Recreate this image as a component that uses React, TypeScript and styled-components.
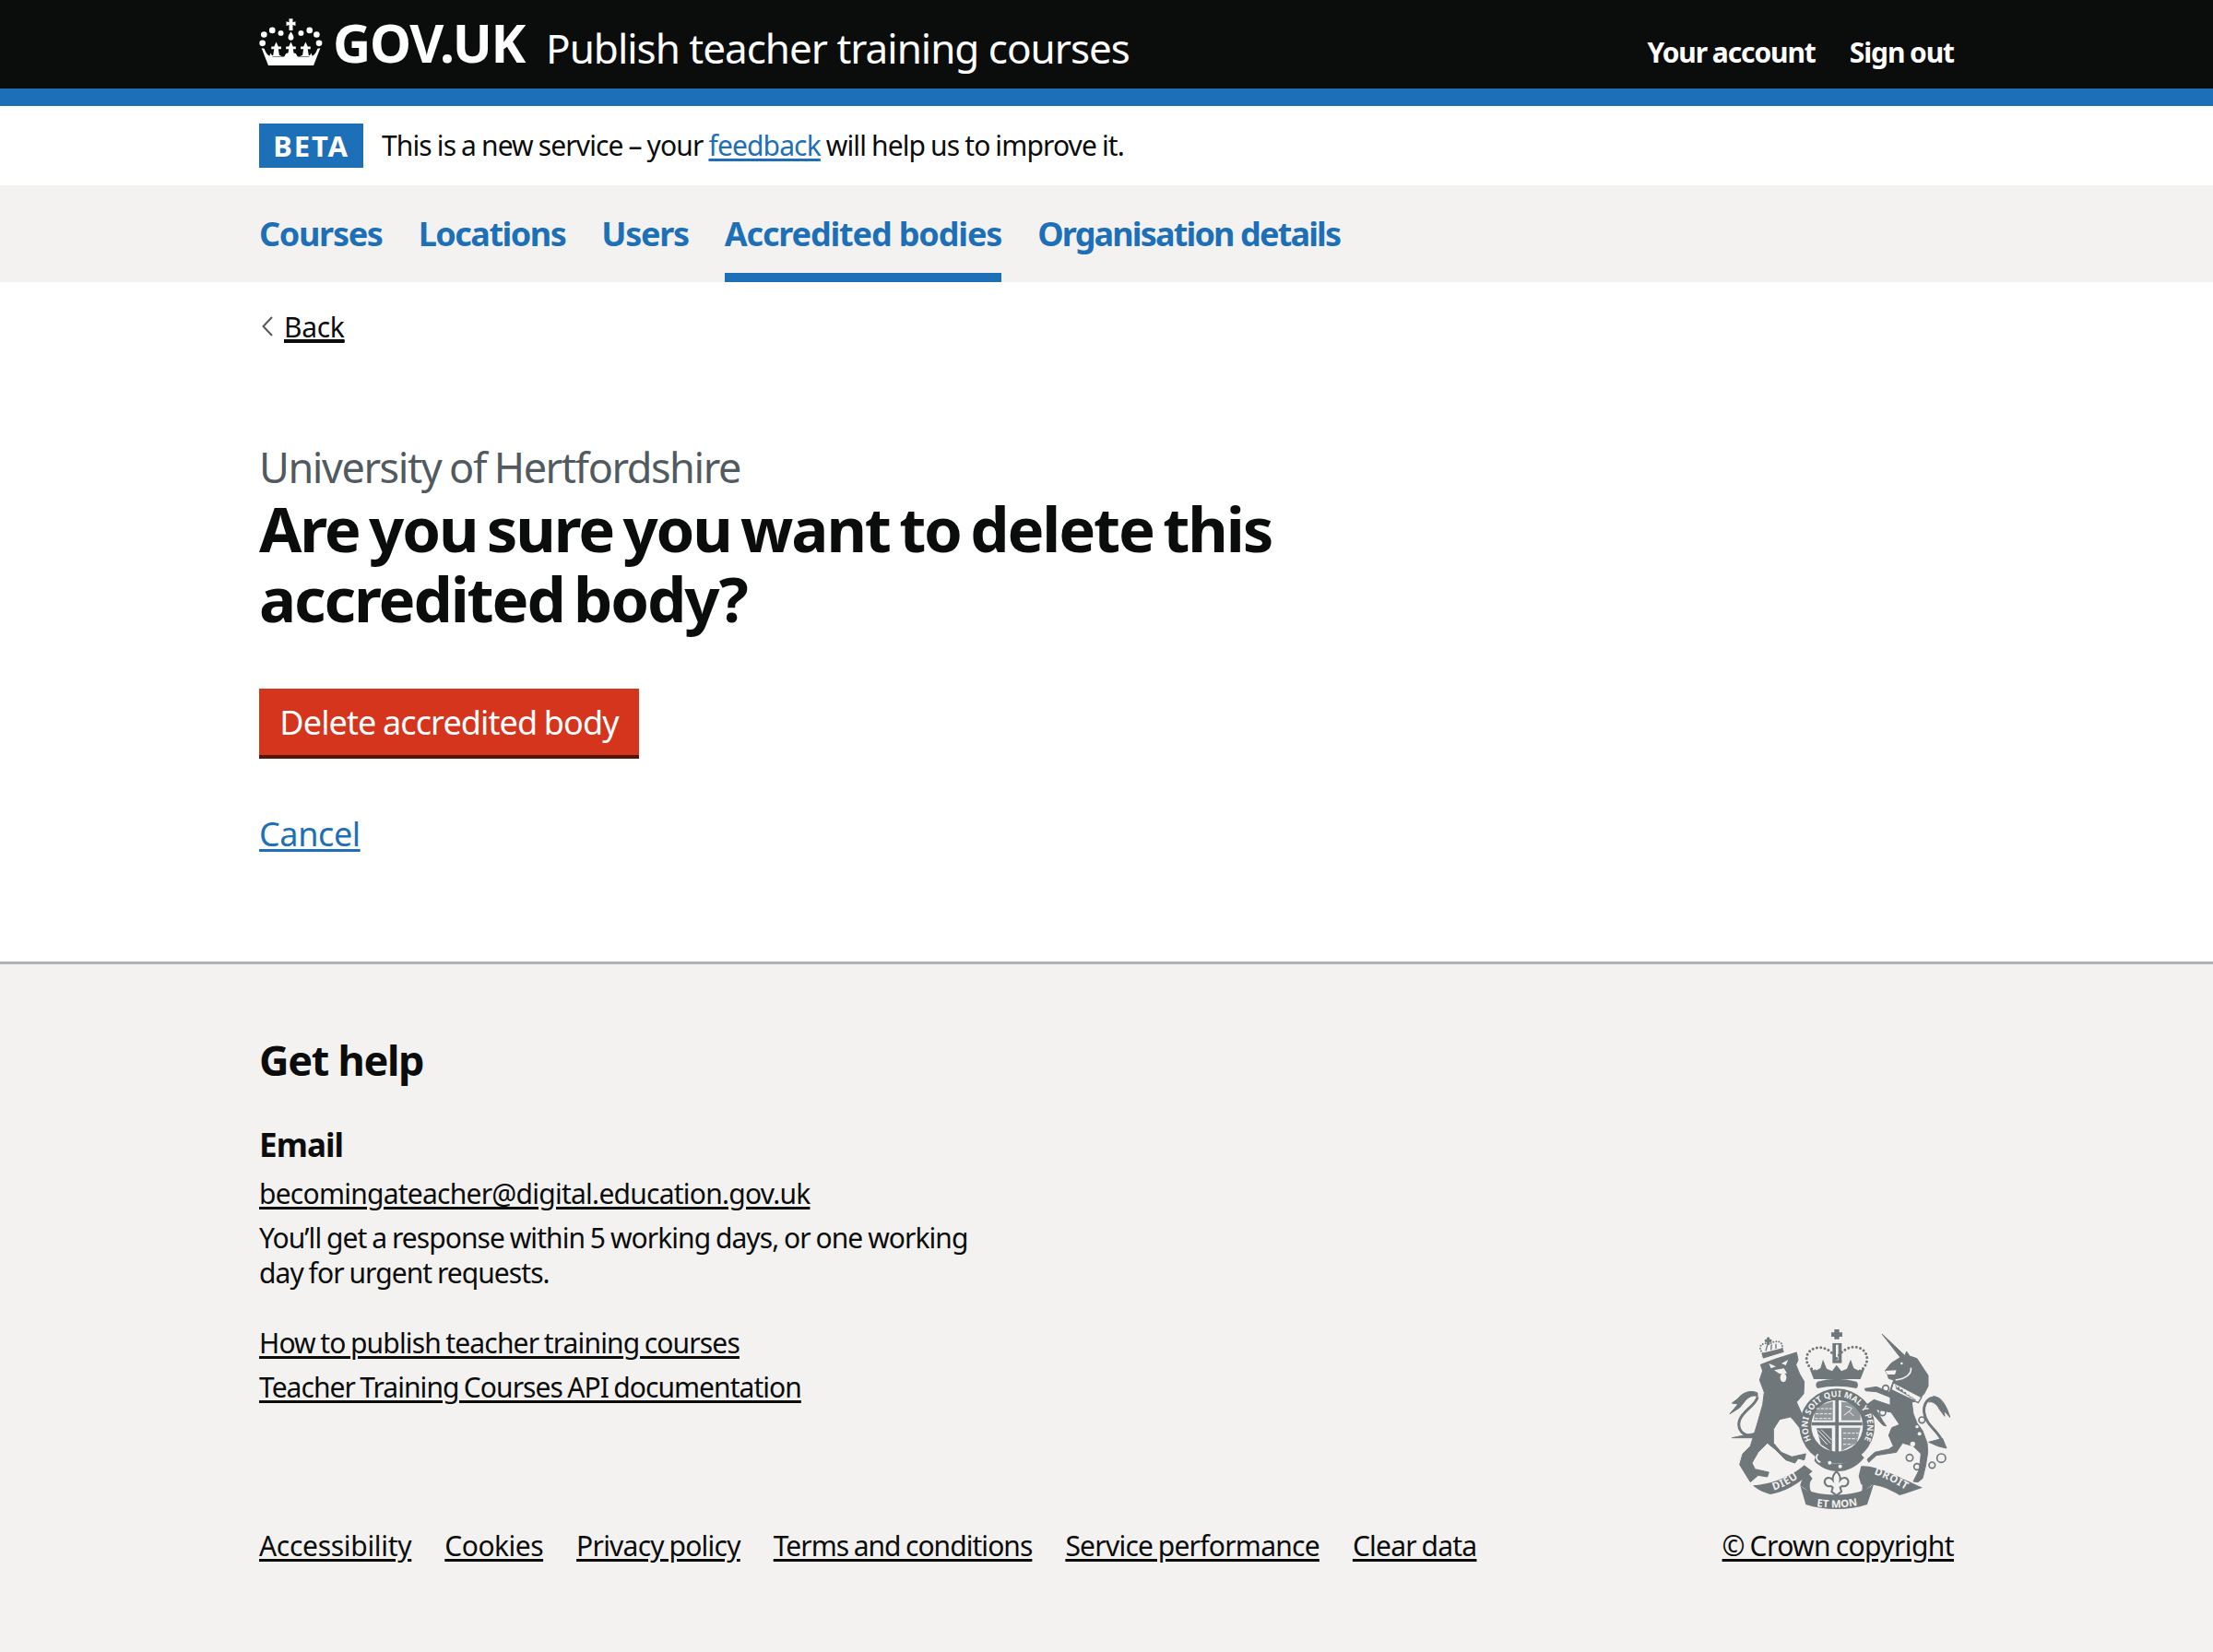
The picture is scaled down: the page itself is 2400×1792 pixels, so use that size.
import React from 'react';
import styled, { createGlobalStyle } from 'styled-components';

const GlobalStyle = createGlobalStyle`
  html, body {
    margin: 0;
    padding: 0;
    background: #fff;
    color: #0b0c0c;
    font-family: "Noto Sans", "Liberation Sans", sans-serif;
  }
`;

const Container = styled.div`
  width: 1838px;
  margin: 0 auto;
`;

const Header = styled.header`
  background: #0b0c0c;
  border-bottom: 19px solid #1d70b8;
`;

const HeaderInner = styled(Container)`
  height: 96px;
  display: flex;
  justify-content: space-between;
  color: #fff;
`;

const Brand = styled.div`
  display: flex;
  align-items: flex-start;
`;

const Crown = styled.svg`
  width: 69px;
  height: 52px;
  margin-top: 20px;
  margin-right: 11px;
`;

const Logotype = styled.span`
  font-size: 57px;
  font-weight: 700;
  line-height: 96px;
  height: 96px;
  margin-top: -2px;
  letter-spacing: -1.3px;
`;

const ServiceName = styled.span`
  font-size: 44px;
  line-height: 104px;
  margin-left: 23px;
  letter-spacing: -1px;
`;

const HeaderLinks = styled.nav`
  display: flex;
  gap: 37px;
  line-height: 114px;
  font-size: 30px;
  font-weight: 700;
  letter-spacing: -1.1px;
  word-spacing: -1px;
`;

const BetaBar = styled(Container)`
  height: 86px;
  display: flex;
  align-items: flex-start;
  padding-top: 19px;
  box-sizing: border-box;
`;

const BetaTag = styled.strong`
  width: 113px;
  height: 48px;
  background: #1d70b8;
  color: #fff;
  font-size: 31px;
  line-height: 49px;
  letter-spacing: 1.8px;
  text-align: center;
  margin-right: 20px;
`;

const BetaText = styled.p`
  margin: 0;
  font-size: 30px;
  line-height: 48px;
  letter-spacing: -0.87px;
  word-spacing: -1px;
`;

const BlueLink = styled.a`
  color: #1d70b8;
  text-decoration: underline;
  text-decoration-thickness: 3px;
  text-underline-offset: 3px;
`;

const TabBar = styled.div`
  background: #f3f2f1;
`;

const Tabs = styled(Container)`
  height: 105px;
  display: flex;
  gap: 39px;
`;

const Tab = styled.a<{ $active?: boolean; $tracking?: number }>`
  color: #1d70b8;
  font-size: 36px;
  font-weight: 700;
  line-height: 105px;
  letter-spacing: ${(p) => p.$tracking ?? -1.3}px;
  box-sizing: border-box;
  border-bottom: 10px solid ${(p) => (p.$active ? '#1d70b8' : 'transparent')};
`;

const Main = styled(Container)`
  height: 737px;
`;

const BackLink = styled.a`
  display: flex;
  align-items: center;
  height: 96px;
  font-size: 30px;
  letter-spacing: -0.3px;
  color: #0b0c0c;
  span {
    text-decoration: underline;
    text-decoration-thickness: 3px;
    text-underline-offset: 3px;
  }
  svg {
    margin: 0 12px 0 3px;
  }
`;

const Caption = styled.div`
  margin-top: 75px;
  font-size: 45px;
  line-height: 60px;
  color: #505a5f;
  letter-spacing: -1.42px;
  word-spacing: -1.5px;
`;

const Title = styled.h1`
  margin: -2px 0 0;
  width: 1200px;
  font-size: 67px;
  line-height: 76px;
  font-weight: 700;
  letter-spacing: -2.1px;
  word-spacing: -5px;
`;

const DangerButton = styled.button`
  display: block;
  margin-top: 60px;
  width: 412px;
  height: 76px;
  padding: 0 0 4px;
  border: 0;
  background: #d4351c;
  box-shadow: inset 0 -4px 0 #55150b;
  color: #fff;
  font-family: inherit;
  font-size: 36px;
  letter-spacing: -0.88px;
  word-spacing: -1px;
`;

const CancelRow = styled.p`
  margin: 54px 0 0;
  font-size: 36px;
  line-height: 56px;
  letter-spacing: -0.4px;
`;

const Footer = styled.footer`
  background: #f3f2f1;
  border-top: 3px solid #b1b4b6;
  height: 749px;
  box-sizing: border-box;
`;

const FooterInner = styled(Container)`
  display: flex;
  justify-content: space-between;
  align-items: flex-end;
  height: 655px;
`;

const FooterLeft = styled.div`
  display: flex;
  flex-direction: column;
`;

const HelpTitle = styled.h2`
  margin: -2px 0 0;
  font-size: 45px;
  line-height: 56px;
  font-weight: 700;
  letter-spacing: -1.3px;
`;

const HelpLabel = styled.h3`
  margin: 40px 0 0;
  font-size: 35px;
  line-height: 48px;
  font-weight: 700;
  letter-spacing: -0.9px;
`;

const FooterLink = styled.a<{ $tracking?: number }>`
  color: #0b0c0c;
  font-size: 30px;
  letter-spacing: ${(p) => p.$tracking ?? -0.75}px;
  word-spacing: -1.5px;
  text-decoration: underline;
  text-decoration-thickness: 3px;
  text-underline-offset: 3px;
`;

const LinkLine = styled.div<{ $top?: number }>`
  line-height: 48px;
  height: 48px;
  margin-top: ${(p) => p.$top ?? 0}px;
`;

const HelpText = styled.p`
  margin: 5px 0 0;
  width: 790px;
  font-size: 30px;
  line-height: 38px;
  letter-spacing: -0.95px;
  word-spacing: -1px;
`;

const MetaLinks = styled.div`
  display: flex;
  gap: 36px;
  line-height: 48px;
  margin-top: 124px;
`;

const CrownCopyright = styled.div`
  display: flex;
  flex-direction: column;
  align-items: center;
  line-height: 48px;
`;

const Arms = styled.svg`
  width: 240px;
  height: 195px;
  margin-bottom: 16px;
  margin-left: 4px;
`;

const fleurX = [118, 166, 214];

const CrownLogo = () => (
  <Crown viewBox="62 30 208 155" aria-hidden="true">
    <g fill="#fff">
      <path d="M160 30h12v12l9-3v14l-9-3v18h-12V50l-9 3V39l9 3z" />
      <path d="M166 72c4 7 9 13 9 19 0 6-4 10-9 10s-9-4-9-10c0-6 5-12 9-19z" />
      <circle cx="105" cy="68" r="10" />
      <circle cx="133" cy="77" r="9" />
      <circle cx="78" cy="82" r="10" />
      <circle cx="73" cy="110" r="10" />
      <circle cx="227" cy="68" r="10" />
      <circle cx="199" cy="77" r="9" />
      <circle cx="250" cy="82" r="10" />
      <circle cx="258" cy="110" r="10" />
      {fleurX.map((x) => (
        <path key={x} d={`M${x} 106l7 15h9v8h-9l3 20 8 4h-36l8-4 3-20h-9v-8h9z`} />
      ))}
      <path d="M70 126l9 2c4 12 9 20 17 24l4-10 6 12 38 0 6-10 16-4 16 4 6 10 38 0 6-12 4 10c8-4 13-12 17-24l9-2-22 57H92z" />
    </g>
  </Crown>
);

const ArmsLogo = () => (
  <Arms viewBox="160 70 720 585" role="img" aria-label="Royal coat of arms">
    <defs>
      <path id="garter" d="M445 455A97 97 0 1 1 582 455" />
      <path id="ribbon-left" d="M278 602C330 590 372 566 410 534" />
      <path id="ribbon-mid" d="M418 640C470 654 552 654 606 636" />
      <path id="ribbon-right" d="M618 538C660 548 700 570 748 600" />
    </defs>

    {/* lion */}
    <g transform="translate(135 45)" fill="#6f777b" stroke="#6f777b" strokeWidth="3" strokeLinejoin="round">
      <path d="M128 140L175 122 245 100 250 125 243 140 255 170 270 195 268 235 245 262 262 300 280 335 290 365 280 385 262 370 255 345 235 320 225 310 190 318 170 350 170 395 195 425 230 440 275 430 270 450 250 445 240 460 210 450 175 415 150 395 120 425 100 460 110 480 155 490 150 505 120 500 95 522 75 490 60 465 70 430 95 405 115 340 135 270 140 230 125 190 135 160Z" />
      <path d="M118 232C100 222 70 228 55 250L35 265 55 268 28 300 60 280 80 255C95 240 110 238 118 245Z" />
      <path d="M105 370C70 375 50 350 60 320 70 290 115 270 118 245" fill="none" strokeWidth="9" />
      <path d="M35 378L112 362 112 378Z" />
      <path d="M133 104L198 88 203 98 137 118Z" />
      <path d="M135 103C115 80 135 65 158 72 175 60 205 60 198 90" fill="none" strokeWidth="6" strokeLinecap="round" strokeDasharray="0 9" />
      <path d="M150 52h6v7h7v6h-7v10h-6V65h-7v-6h7z" />
      <path d="M145 95L150 76M162 92L164 74M178 88L178 72" strokeWidth="4" />
      <path d="M155 136L178 146 162 152ZM196 136L218 124 210 142ZM172 158L204 152 214 168 190 170Z" fill="#f3f2f1" stroke="none" />
      <ellipse cx="202" cy="182" rx="10" ry="14" fill="#f3f2f1" stroke="none" />
    </g>

    {/* unicorn */}
    <g transform="translate(510 45)" fill="#6f777b" stroke="#6f777b" strokeWidth="3" strokeLinejoin="round">
      <path d="M148 40L222 110 212 122Z" />
      <path d="M158 160L178 135 205 118 222 112 228 97 238 112 262 120 278 145 298 175 298 210 285 235 262 258 245 262 250 300 262 330 280 355 295 395 297 425 290 470 280 510 265 522 250 520 270 480 275 430 250 405 215 395 195 425 130 435 105 458 100 448 125 425 170 415 185 405 170 370 180 345 205 335 178 295 128 285 150 322 162 340 150 336 118 300 96 272 122 254 175 272 175 246 130 228 95 225 92 218 130 212 172 230 186 190 170 185 165 170Z" />
      <path d="M158 160L195 158 190 172 166 172Z" fill="#f3f2f1" stroke="none" />
      <circle cx="212" cy="136" r="4" fill="#f3f2f1" stroke="none" />
      <path d="M242 150C246 172 222 186 192 190" fill="none" stroke="#f3f2f1" strokeWidth="5" />
      <path d="M185 198L277 246 266 264 178 222Z" fill="#f3f2f1" stroke="#6f777b" strokeWidth="4" />
      <path d="M192 206l5 10 6-4 3 10 8-2 3 10 8-1 3 10 8-1 3 9 8-1 3 8 9 1-64-36z" strokeWidth="1" />
      <path d="M345 395C340 360 290 340 285 295 282 265 300 245 322 248" fill="none" strokeWidth="9" />
      <path d="M315 243C340 245 350 265 360 285L370 312 350 290 352 308 335 285C325 265 310 258 300 262Z" />
      <path d="M300 392L345 380 358 412 330 405Z" />
      <circle cx="270" cy="365" r="6" fill="#f3f2f1" stroke="none" />
      <circle cx="248" cy="398" r="8" fill="#f3f2f1" stroke="none" />
      <circle cx="262" cy="342" r="5" fill="#f3f2f1" stroke="none" />
      <g fill="none" strokeWidth="5">
        <circle cx="160" cy="217" r="10" />
        <circle cx="150" cy="296" r="10" />
        <circle cx="278" cy="320" r="10" />
        <circle cx="238" cy="443" r="11" />
        <circle cx="262" cy="472" r="10" />
        <circle cx="311" cy="467" r="10" />
        <circle cx="341" cy="444" r="14" />
      </g>
    </g>

    {/* royal crown */}
    <g fill="#6f777b">
      <path d="M503 70h16v10h10v14h-10v8h-16v-8h-10V80h10z" />
      <path d="M497 115h30v65h-30z" />
      <path d="M508 120h8v50h-8z" fill="#f3f2f1" />
      <path d="M422 196L440 206 458 196 466 168 478 198 496 206 510 186 526 206 544 198 556 168 566 196 584 206 602 196 588 232H436Z" />
      <path d="M448 240Q510 222 575 240 585 250 575 262 510 248 448 262 438 250 448 240Z" />
      <path d="M440 205C405 190 400 140 445 130 470 125 495 140 510 165 525 140 555 120 585 130 620 145 615 190 585 205" fill="none" stroke="#6f777b" strokeWidth="9" strokeLinecap="round" strokeDasharray="0 13" />
    </g>

    {/* garter and shield */}
    <g fill="#6f777b">
      <circle cx="512" cy="385" r="122" />
      <path d="M445 470C465 500 490 508 512 508S565 498 584 470L600 488C575 520 545 532 515 532 485 532 455 518 438 498Z" />
    </g>
    <circle cx="512" cy="384" r="84" fill="#f3f2f1" />
    <g fill="#6f777b">
      <path d="M506 296h11v176h-11zM430 372h164v11H430z" />
      <path d="M526 306l50 4 12 42v14h-62z" opacity="0.75" />
      <path d="M442 322l56-18v62h-62z" opacity="0.75" />
      <path d="M526 390h62l-12 50-50 26z" opacity="0.75" />
      <path d="M445 392h50v76l-36-24z" />
    </g>
    <g fill="none" stroke="#f3f2f1" strokeWidth="3">
      <path d="M450 398L490 440M450 412L480 445M460 396L494 430" />
      <path d="M445 328h50M442 345h54M440 360h56M532 408h50M532 426h44M532 444h30" strokeDasharray="10 4" />
      <path d="M540 320l20 6-8 12 14 14M534 350l18-14" />
    </g>
    <circle cx="488" cy="504" r="6" fill="#f3f2f1" />
    <circle cx="522" cy="516" r="6" fill="#f3f2f1" />
    <path d="M450 476C440 484 446 500 458 502" fill="none" stroke="#f3f2f1" strokeWidth="5" />

    {/* motto ribbon */}
    <g fill="#6f777b">
      <path d="M238 578C300 575 370 545 405 512L432 532C385 575 340 600 295 607 270 600 250 590 238 578Z" />
      <path d="M392 578C425 618 590 622 632 572L610 640C550 660 470 660 410 640Z" />
      <path d="M590 515C640 510 720 555 790 585 760 595 735 605 715 610 670 580 620 570 590 575L582 548Z" />
      <path d="M392 578C395 560 405 545 420 540L432 556C420 566 420 590 432 606ZM632 572C628 560 612 545 600 540L586 560C596 570 596 590 590 604Z" />
    </g>
    <path d="M510 532c8 8 14 16 12 28 8-10 22-10 26 2 3 12-8 22-20 18l-6 4 4 14-16 12-16-12 4-14-6-4c-12 4-23-6-20-18 4-12 18-12 26-2-2-12 4-20 12-28z" fill="#f3f2f1" stroke="#6f777b" strokeWidth="6" />
    <g fill="#f3f2f1" fontFamily="'Noto Sans', sans-serif" fontWeight="700" textAnchor="middle">
      <text fontSize="27" letterSpacing="0.5">
        <textPath href="#garter" startOffset="50%">HONI SOIT QUI MAL Y PENSE</textPath>
      </text>
      <text fontSize="34" letterSpacing="2">
        <textPath href="#ribbon-left" startOffset="50%">DIEU</textPath>
      </text>
      <text fontSize="34">
        <textPath href="#ribbon-mid" startOffset="50%">ET MON</textPath>
      </text>
      <text fontSize="34" letterSpacing="2">
        <textPath href="#ribbon-right" startOffset="50%">DROIT</textPath>
      </text>
    </g>
  </Arms>
);

const App: React.FC = () => {
  return (
    <>
      <GlobalStyle />
      <Header>
        <HeaderInner>
          <Brand>
            <CrownLogo />
            <Logotype>GOV.UK</Logotype>
            <ServiceName>Publish teacher training courses</ServiceName>
          </Brand>
          <HeaderLinks>
            <span>Your account</span>
            <span>Sign out</span>
          </HeaderLinks>
        </HeaderInner>
      </Header>
      <BetaBar>
        <BetaTag>BETA</BetaTag>
        <BetaText>
          This is a new service – your <BlueLink href="#">feedback</BlueLink> will help us to improve it.
        </BetaText>
      </BetaBar>
      <TabBar>
        <Tabs>
          <Tab>Courses</Tab>
          <Tab $tracking={-1.5}>Locations</Tab>
          <Tab>Users</Tab>
          <Tab $active $tracking={-1.15}>Accredited bodies</Tab>
          <Tab $tracking={-1.85}>Organisation details</Tab>
        </Tabs>
      </TabBar>
      <Main>
        <BackLink href="#">
          <svg width="12" height="22" viewBox="0 0 12 22" aria-hidden="true">
            <path d="M11 1 1.5 11 11 21" fill="none" stroke="#505a5f" strokeWidth="2" />
          </svg>
          <span>Back</span>
        </BackLink>
        <Caption>University of Hertfordshire</Caption>
        <Title>Are you sure you want to delete this accredited body?</Title>
        <DangerButton>Delete accredited body</DangerButton>
        <CancelRow>
          <BlueLink href="#">Cancel</BlueLink>
        </CancelRow>
      </Main>
      <Footer>
        <FooterInner>
          <FooterLeft>
            <HelpTitle>Get help</HelpTitle>
            <HelpLabel>Email</HelpLabel>
            <LinkLine $top={5}>
              <FooterLink href="#">becomingateacher@digital.education.gov.uk</FooterLink>
            </LinkLine>
            <HelpText>You’ll get a response within 5 working days, or one working day for urgent requests.</HelpText>
            <LinkLine $top={33}>
              <FooterLink href="#" $tracking={-0.85}>How to publish teacher training courses</FooterLink>
            </LinkLine>
            <LinkLine>
              <FooterLink href="#" $tracking={-0.95}>Teacher Training Courses API documentation</FooterLink>
            </LinkLine>
            <MetaLinks>
              <FooterLink href="#" $tracking={-0.3}>Accessibility</FooterLink>
              <FooterLink href="#" $tracking={-0.5}>Cookies</FooterLink>
              <FooterLink href="#">Privacy policy</FooterLink>
              <FooterLink href="#" $tracking={-0.95}>Terms and conditions</FooterLink>
              <FooterLink href="#">Service performance</FooterLink>
              <FooterLink href="#">Clear data</FooterLink>
            </MetaLinks>
          </FooterLeft>
          <CrownCopyright>
            <ArmsLogo />
            <FooterLink href="#" $tracking={-0.6}>© Crown copyright</FooterLink>
          </CrownCopyright>
        </FooterInner>
      </Footer>
    </>
  );
};

export default App;
